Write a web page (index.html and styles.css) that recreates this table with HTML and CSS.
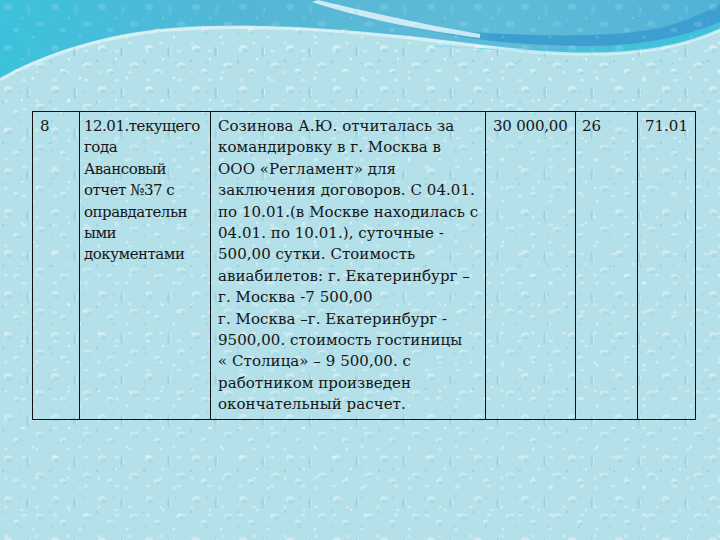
FILE: index.html
```html
<!DOCTYPE html>
<html lang="ru">
<head>
<meta charset="utf-8">
<title>Авансовый отчет</title>
<link rel="stylesheet" href="styles.css">
</head>
<body>
<div class="bg" aria-hidden="true">
  <svg width="720" height="540" viewBox="0 0 720 540" xmlns="http://www.w3.org/2000/svg">
    <defs>
      <pattern id="drops" width="47" height="41" patternUnits="userSpaceOnUse">
        <ellipse cx="8" cy="7" rx="4" ry="3" fill="#ffffff" opacity="0.35"/>
        <ellipse cx="9" cy="9" rx="3" ry="2" fill="#7fc1d3" opacity="0.35"/>
        <path d="M28 4 q3 8 0 13 q-4 -5 0 -13z" fill="#84c6d8" opacity="0.4"/>
        <path d="M29 6 q1.5 5 0 8" stroke="#ffffff" stroke-width="0.8" fill="none" opacity="0.55"/>
        <ellipse cx="40" cy="24" rx="4.5" ry="2.5" fill="#ffffff" opacity="0.32"/>
        <ellipse cx="41" cy="25.5" rx="3.5" ry="1.8" fill="#82c4d6" opacity="0.35"/>
        <ellipse cx="16" cy="30" rx="3" ry="2.2" fill="#ffffff" opacity="0.35"/>
        <ellipse cx="17" cy="31.5" rx="2.2" ry="1.5" fill="#7dc2d4" opacity="0.35"/>
        <circle cx="33" cy="37" r="1.5" fill="#ffffff" opacity="0.4"/>
        <circle cx="3" cy="20" r="1.3" fill="#7dc2d4" opacity="0.4"/>
        <circle cx="22" cy="18" r="1.2" fill="#ffffff" opacity="0.45"/>
      </pattern>
      <pattern id="drops2" width="31" height="29" patternUnits="userSpaceOnUse">
        <circle cx="6" cy="14" r="1.6" fill="#ffffff" opacity="0.35"/>
        <circle cx="21" cy="5" r="1.3" fill="#88c7d8" opacity="0.35"/>
        <ellipse cx="24" cy="22" rx="2.5" ry="1.6" fill="#ffffff" opacity="0.3"/>
      </pattern>
      <linearGradient id="waveTop" x1="0" y1="0" x2="1" y2="0">
        <stop offset="0" stop-color="#3cc2dc"/>
        <stop offset="0.35" stop-color="#55b6d6"/>
        <stop offset="0.7" stop-color="#5fbcd8"/>
        <stop offset="1" stop-color="#52b2d6"/>
      </linearGradient>
      <linearGradient id="band" x1="0" y1="0" x2="1" y2="0">
        <stop offset="0" stop-color="#3fa6d0" stop-opacity="0"/>
        <stop offset="0.3" stop-color="#3a9fcf"/>
        <stop offset="1" stop-color="#3f9fd2"/>
      </linearGradient>
    </defs>
    <rect width="720" height="540" fill="#b3e0e9"/>
    <rect width="720" height="540" fill="url(#drops)"/>
    <rect width="720" height="540" fill="url(#drops2)"/>
    <path d="M0 0 H720 V28 C690 42 650 52 590 52 C520 52 470 42 400 35 C330 28 250 22 170 28 C100 34 40 55 0 78 Z" fill="url(#waveTop)"/>
    <path d="M430 46 C520 50 600 52 650 40 C680 32 700 22 720 12 V30 C690 44 650 54 590 54 C520 54 470 46 430 46 Z" fill="#40c3dc" opacity="0.8"/>
    <path d="M400 26 C500 36 600 40 660 28 C690 20 705 12 720 4 V22 C690 34 650 46 590 46 C520 46 470 40 400 26 Z" fill="url(#band)"/>
    <path d="M318 0 C360 10 420 24 480 34 L480 38 C420 30 360 18 312 2 Z" fill="#e8f7fb" opacity="0.8"/>
    <path d="M0 80 C40 57 100 36 170 30 C250 24 330 30 400 37 C470 44 520 54 590 54 C650 54 690 44 720 30" stroke="#e4f6fa" stroke-width="3" fill="none" opacity="0.7"/>
    <rect width="720" height="110" fill="url(#drops)" opacity="0.4"/>
  </svg>
</div>

<main class="slide">
  <table class="report">
    <colgroup>
      <col class="c-num">
      <col class="c-date">
      <col class="c-desc">
      <col class="c-sum">
      <col class="c-acc1">
      <col class="c-acc2">
    </colgroup>
    <tbody>
      <tr>
        <td>8</td>
        <td class="date">12.01.текущего<br>года<br>Авансовый<br>отчет №37 с<br>оправдательн<br>ыми<br>документами</td>
        <td class="desc">Созинова А.Ю. отчиталась за<br>командировку в г. Москва в<br>ООО «Регламент» для<br>заключения договоров. С 04.01.<br>по 10.01.(в Москве находилась с<br>04.01. по 10.01.), суточные -<br>500,00 сутки. Стоимость<br>авиабилетов: г. Екатеринбург –<br>г. Москва -7 500,00<br>г. Москва –г. Екатеринбург -<br>9500,00. стоимость гостиницы<br>« Столица» – 9 500,00. с<br>работником произведен<br>окончательный расчет.</td>
        <td class="sum">30 000,00</td>
        <td class="acc">26</td>
        <td>71.01</td>
      </tr>
    </tbody>
  </table>
</main>
</body>
</html>
```

FILE: styles.css
```css
html, body {
  margin: 0;
  padding: 0;
}

body {
  width: 720px;
  height: 540px;
  overflow: hidden;
  position: relative;
  background: #b3e0e9;
  font-family: "DejaVu Serif", "Liberation Serif", serif;
  color: #161616;
}

.bg {
  position: absolute;
  inset: 0;
  z-index: 0;
}

.bg svg {
  display: block;
}

.slide {
  position: relative;
  z-index: 1;
  padding: 111px 0 0 32px;
}

.report {
  border-collapse: collapse;
  table-layout: fixed;
  width: 663px;
  border: 1px solid #111;
}

.c-num { width: 47px; }
.c-date { width: 131px; }
.c-desc { width: 275px; }
.c-sum { width: 90px; }
.c-acc1 { width: 62px; }
.c-acc2 { width: 58px; }

.report td {
  border: 1px solid #111;
  vertical-align: top;
  padding: 4px 4px 3px 7px;
  font-size: 15px;
  line-height: 21.4px;
  white-space: nowrap;
  overflow: visible;
}

.report td.date {
  padding-left: 4px;
  letter-spacing: -0.5px;
}

.report td.desc {
  padding-left: 7px;
  letter-spacing: 0.05px;
}

.report td.sum {
  letter-spacing: -0.2px;
}

.report td.acc {
  padding-left: 6px;
}
```
